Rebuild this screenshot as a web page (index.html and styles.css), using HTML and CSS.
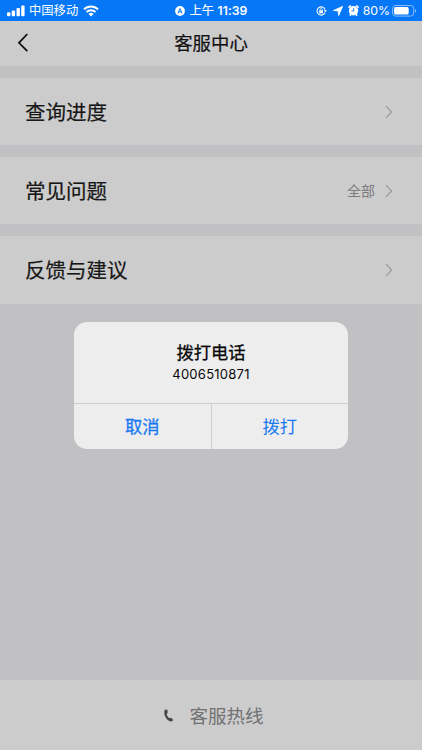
FILE: index.html
```html
<!DOCTYPE html>
<html lang="zh-CN">
<head>
<meta charset="utf-8">
<title>客服中心</title>
<link rel="stylesheet" href="styles.css">
</head>
<body>
<div class="screen">
  <div class="status">
    <div class="status-left">
      <svg class="signal" width="18" height="12" viewBox="0 0 18 12" fill="#fff"><rect x="0" y="7.3" width="3.4" height="3.9" rx="1"/><rect x="4.7" y="5.4" width="3.4" height="5.8" rx="1"/><rect x="9.5" y="3" width="3.4" height="8.2" rx="1"/><rect x="14.2" y="0.4" width="3.4" height="10.8" rx="1"/></svg>
      <span class="carrier">中国移动</span>
      <svg class="wifi" width="16" height="12" viewBox="0 0 16 12" fill="none" stroke="#fff" stroke-width="2"><path d="M1 4.4a10 10 0 0 1 14 0M3.5 7a6.4 6.4 0 0 1 9 0"/><path d="M8 11.6 5.5 9a3.6 3.6 0 0 1 5 0z" fill="#fff" stroke="none"/></svg>
    </div>
    <div class="status-mid">
      <svg width="10" height="10" viewBox="0 0 10 10"><circle cx="5" cy="5" r="4.9" fill="#fff"/><path d="M3 7.3 5 2.6l2 4.7M3.9 6.2 5 5.5l1.1.7" fill="none" stroke="#0577f7" stroke-width="1"/></svg>
      <span class="time">上午 <b>11:39</b></span>
    </div>
    <div class="status-right">
      <svg class="lock" width="11" height="10" viewBox="0 0 11 10" fill="none" stroke="#fff"><path d="M8.9 6.7A4.1 4.1 0 1 1 9 3.5" stroke-width="1.1"/><path d="M7.7 4.3h3.2L9.3 6.5z" fill="#fff" stroke="none"/><rect x="3.2" y="4.4" width="3.8" height="2.9" fill="#fff" stroke="none"/><path d="M4 4.6V3.7a1.1 1.1 0 0 1 2.2 0v.9" stroke-width=".8"/></svg>
      <svg class="locate" width="10" height="10" viewBox="0 0 10 10"><path d="M9.7.3 5.7 9.5 5.1 4.9.5 4.5z" fill="#fff" stroke="#fff" stroke-width=".8" stroke-linejoin="round"/></svg>
      <svg class="alarm" width="11" height="11" viewBox="0 0 11 11"><path d="M.5 2.7 2.8.5M8.2.5l2.3 2.2M1.8 10.5l1.2-1.2M9.2 10.5 8 9.3" stroke="#fff" stroke-width="1.7"/><circle cx="5.5" cy="5.7" r="4.7" fill="#fff"/><path d="M5.7 3v3H3.4" fill="none" stroke="#0577f7" stroke-width=".9"/></svg>
      <span class="percent">80%</span>
      <svg class="battery" width="25" height="12" viewBox="0 0 25 12"><rect x=".5" y=".5" width="21.2" height="10.6" rx="3.2" fill="none" stroke="#8abcfa"/><rect x="2.1" y="2.1" width="14.6" height="7.4" rx="1.6" fill="#fff"/><path d="M23 4v3.7c.8-.3 1.2-1 1.2-1.85S23.8 4.3 23 4z" fill="#8abcfa"/></svg>
    </div>
  </div>
  <header class="nav">
    <svg class="back" width="12" height="20" viewBox="0 0 12 20"><path d="M10.3 1 2 9.8l8.300 8.400" fill="none" stroke="#111" stroke-width="1.8"/></svg>
    <h1>客服中心</h1>
  </header>
  <main class="list">
    <div class="row"><span class="label">查询进度</span><svg class="chev" width="8" height="14" viewBox="0 0 8 14"><path d="M1 1.2 6.6 7 1 12.8"/></svg></div>
    <div class="row"><span class="label">常见问题</span><span class="all">全部</span><svg class="chev" width="8" height="14" viewBox="0 0 8 14"><path d="M1 1.2 6.6 7 1 12.8"/></svg></div>
    <div class="row last"><span class="label">反馈与建议</span><svg class="chev" width="8" height="14" viewBox="0 0 8 14"><path d="M1 1.2 6.6 7 1 12.8"/></svg></div>
  </main>
  <footer class="hotline">
    <svg width="10" height="13" viewBox="0 0 10 13"><path d="M.6 1.2Q1.3.4 2.5.5q.8 0 .9.8l.3 2q.1.8-.7 1.1l-.5.3c.5 2 1.500 3.500 3 4.600l.6-.4q.6-.4 1.200.1l1.400 1.200q.6.6.1 1.200-.7 1-2 1C3.700 12.100.5 8 .3 4Q.2 2 .6 1.200z" fill="#444446"/></svg>
    <span>客服热线</span>
  </footer>
  <div class="dialog">
    <div class="message"><h2>拨打电话</h2><p>4006510871</p></div>
    <div class="actions"><button class="cancel">取消</button><button>拨打</button></div>
  </div>
</div>
</body>
</html>
```
FILE: styles.css
```css
* { box-sizing: border-box; margin: 0; padding: 0; }
body {
  font-family: Inter, "Noto Sans CJK SC", sans-serif;
  background: #c1c1c3;
}
svg { display: block; flex: none; }
.screen {
  position: relative;
  width: 422px;
  height: 750px;
  display: flex;
  flex-direction: column;
  overflow: hidden;
}
.status {
  height: 21px;
  flex: none;
  display: grid;
  grid-template-columns: 1fr auto 1fr;
  align-items: center;
  background: #0577f7;
  color: #fff;
  font-size: 12.3px;
  line-height: 20px;
  white-space: nowrap;
}
.status-left, .status-mid, .status-right { display: flex; align-items: center; }
.status-left { padding-left: 7px; }
.carrier { margin: 1px 5px 0 4px; }
.status-mid { gap: 5px; }
.time { margin-top: 1px; -webkit-text-stroke: .15px #fff; }
.time b { font-weight: 500; letter-spacing: .1px; }
.status-right { justify-content: flex-end; padding-right: 5px; }
.lock { margin-right: 6px; }
.locate { margin-right: 5px; }
.alarm { margin-right: 4px; }
.percent { margin: 1px 2px 0 0; letter-spacing: -.05px; }
.nav {
  height: 45px;
  flex: none;
  display: grid;
  grid-template-columns: 1fr auto 1fr;
  align-items: center;
  background: #cccccc;
}
.back { margin: -1px 0 0 17px; }
h1 {
  grid-column: 2;
  padding-bottom: 1px;
  font-size: 18.4px;
  font-weight: 400;
  line-height: 44px;
  color: #111;
  -webkit-text-stroke: .2px #111;
}
.list {
  padding-top: 12px;
  flex: 1;
  display: flex;
  flex-direction: column;
  gap: 12px;
}
.row {
  height: 67px;
  flex: none;
  display: flex;
  align-items: center;
  padding: 0 29px 0 25px;
  background: #cccccc;
}
.last { height: 68px; }
.label {
  flex: 1;
  padding-top: 2px;
  font-size: 20.5px;
  line-height: 30px;
  color: #171717;
  -webkit-text-stroke: .22px #171717;
}
.all { font-size: 14px; color: #7c7c7e; margin: -1px 10px 0 0; }
.chev path { fill: none; stroke: #9b9b9d; stroke-width: 1.2; }
.hotline {
  height: 70px;
  flex: none;
  display: flex;
  align-items: center;
  justify-content: center;
  gap: 15px;
  padding-left: 6px;
  background: #cccccc;
  color: #727275;
  font-size: 18.5px;
}
.hotline span { padding-bottom: 1px; }
.dialog {
  position: absolute;
  left: 74px;
  top: 322px;
  width: 274px;
  height: 126.5px;
  border-radius: 13px;
  background: #ededee;
  overflow: hidden;
  display: flex;
  flex-direction: column;
}
.message { flex: 1; padding-top: 19px; text-align: center; color: #080808; }
h2 { font-size: 17.3px; line-height: 24px; font-weight: 400; -webkit-text-stroke: .3px #080808; }
.message p { font-size: 13px; line-height: 18px; letter-spacing: .25px; }
.actions { height: 45.5px; display: flex; border-top: 1px solid #cfcfd1; }
.actions button {
  flex: 1;
  padding-bottom: 1px;
  border: 0;
  background: none;
  font: inherit;
  font-size: 17.3px;
  color: #1879f2;
}
.actions .cancel { border-right: 1px solid #cfcfd1; -webkit-text-stroke: .3px #1879f2; }
```
